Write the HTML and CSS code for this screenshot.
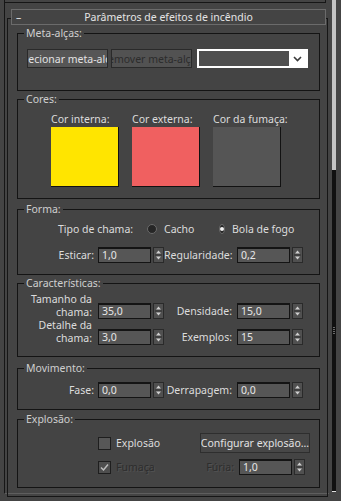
FILE: index.html
```html
<!DOCTYPE html>
<html lang="pt">
<head>
<meta charset="utf-8">
<title>Parâmetros de efeitos de incêndio</title>
<link rel="stylesheet" href="styles.css">
</head>
<body>
<div class="screen">
  <div class="main">
    <div class="outer">
      <div class="prev"></div>
      <div class="rollout">
        <div class="rollout-head">
          <span class="minus">–</span>
          <span class="title">Parâmetros de efeitos de incêndio</span>
          <span></span>
        </div>

        <fieldset class="grp grp-meta">
          <legend class="grp-label">Meta-alças:</legend>
          <div class="meta-body">
            <div class="btn"><span class="btn-text">Selecionar meta-alças</span></div>
            <div class="btn btn-off"><span class="btn-text">Remover meta-alças</span></div>
            <svg class="combo" width="111" height="19" viewBox="0 0 111 19">
              <rect x="0" y="0" width="111" height="19" fill="#ffffff"/>
              <rect x="2" y="2" width="90" height="15" fill="#4f4f4f"/>
              <path d="M97 8 L100.5 11.5 L104 8" fill="none" stroke="#3a3a3a" stroke-width="1.6"/>
            </svg>
          </div>
        </fieldset>

        <fieldset class="grp grp-cores">
          <legend class="grp-label">Cores:</legend>
          <div class="cores-body">
            <div class="swatch-col"><span class="sw-label">Cor interna:</span><span class="swatch sw-yellow"></span></div>
            <div class="swatch-col"><span class="sw-label">Cor externa:</span><span class="swatch sw-red"></span></div>
            <div class="swatch-col"><span class="sw-label">Cor da fumaça:</span><span class="swatch sw-gray"></span></div>
          </div>
        </fieldset>

        <fieldset class="grp grp-forma">
          <legend class="grp-label">Forma:</legend>
          <div class="forma-body">
            <div class="radio-row">
              <span class="radio-title">Tipo de chama:</span>
              <span class="radio-opt"><span class="radio"></span>Cacho</span>
              <span class="radio-opt"><span class="radio radio-on"></span>Bola de fogo</span>
            </div>
            <div class="num-row">
              <span class="lbl1">Esticar:</span>
              <span class="field">1,0</span>
              <span class="spin"><svg width="9" height="14" viewBox="0 0 9 14"><path d="M4.5 2.5 L7 5.5 L2 5.5 Z" fill="#cfcfcf"/><path d="M1 7 H8" stroke="#2e2e2e" stroke-width="1"/><path d="M4.5 11.5 L7 8.5 L2 8.5 Z" fill="#cfcfcf"/></svg></span>
              <span class="lbl2">Regularidade:</span>
              <span class="field">0,2</span>
              <span class="spin"><svg width="9" height="14" viewBox="0 0 9 14"><path d="M4.5 2.5 L7 5.5 L2 5.5 Z" fill="#cfcfcf"/><path d="M1 7 H8" stroke="#2e2e2e" stroke-width="1"/><path d="M4.5 11.5 L7 8.5 L2 8.5 Z" fill="#cfcfcf"/></svg></span>
            </div>
          </div>
        </fieldset>

        <fieldset class="grp grp-carac">
          <legend class="grp-label">Características:</legend>
          <div class="carac-body">
            <div class="num-row num-row-carac">
              <span class="lbl1 lbl-two">Tamanho da<br>chama:</span>
              <span class="field">35,0</span>
              <span class="spin"><svg width="9" height="14" viewBox="0 0 9 14"><path d="M4.5 2.5 L7 5.5 L2 5.5 Z" fill="#cfcfcf"/><path d="M1 7 H8" stroke="#2e2e2e" stroke-width="1"/><path d="M4.5 11.5 L7 8.5 L2 8.5 Z" fill="#cfcfcf"/></svg></span>
              <span class="lbl2">Densidade:</span>
              <span class="field">15,0</span>
              <span class="spin"><svg width="9" height="14" viewBox="0 0 9 14"><path d="M4.5 2.5 L7 5.5 L2 5.5 Z" fill="#cfcfcf"/><path d="M1 7 H8" stroke="#2e2e2e" stroke-width="1"/><path d="M4.5 11.5 L7 8.5 L2 8.5 Z" fill="#cfcfcf"/></svg></span>
            </div>
            <div class="num-row num-row-carac">
              <span class="lbl1 lbl-two">Detalhe da<br>chama:</span>
              <span class="field">3,0</span>
              <span class="spin"><svg width="9" height="14" viewBox="0 0 9 14"><path d="M4.5 2.5 L7 5.5 L2 5.5 Z" fill="#cfcfcf"/><path d="M1 7 H8" stroke="#2e2e2e" stroke-width="1"/><path d="M4.5 11.5 L7 8.5 L2 8.5 Z" fill="#cfcfcf"/></svg></span>
              <span class="lbl2">Exemplos:</span>
              <span class="field">15</span>
              <span class="spin"><svg width="9" height="14" viewBox="0 0 9 14"><path d="M4.5 2.5 L7 5.5 L2 5.5 Z" fill="#cfcfcf"/><path d="M1 7 H8" stroke="#2e2e2e" stroke-width="1"/><path d="M4.5 11.5 L7 8.5 L2 8.5 Z" fill="#cfcfcf"/></svg></span>
            </div>
          </div>
        </fieldset>

        <fieldset class="grp grp-mov">
          <legend class="grp-label">Movimento:</legend>
          <div class="mov-body">
            <div class="num-row">
              <span class="lbl1">Fase:</span>
              <span class="field">0,0</span>
              <span class="spin"><svg width="9" height="14" viewBox="0 0 9 14"><path d="M4.5 2.5 L7 5.5 L2 5.5 Z" fill="#cfcfcf"/><path d="M1 7 H8" stroke="#2e2e2e" stroke-width="1"/><path d="M4.5 11.5 L7 8.5 L2 8.5 Z" fill="#cfcfcf"/></svg></span>
              <span class="lbl2">Derrapagem:</span>
              <span class="field">0,0</span>
              <span class="spin"><svg width="9" height="14" viewBox="0 0 9 14"><path d="M4.5 2.5 L7 5.5 L2 5.5 Z" fill="#cfcfcf"/><path d="M1 7 H8" stroke="#2e2e2e" stroke-width="1"/><path d="M4.5 11.5 L7 8.5 L2 8.5 Z" fill="#cfcfcf"/></svg></span>
            </div>
          </div>
        </fieldset>

        <fieldset class="grp grp-expl">
          <legend class="grp-label">Explosão:</legend>
          <div class="expl-body">
            <div class="expl-row expl-row1">
              <span class="check-opt"><span class="check"></span>Explosão</span>
              <div class="btn btn-config"><span class="btn-text">Configurar explosão...</span></div>
            </div>
            <div class="expl-row expl-row2">
              <span class="check-opt check-opt-off"><span class="check check-on"><svg width="9" height="9" viewBox="0 0 9 9"><path d="M1 4.5 L3.5 7 L8 1.5" fill="none" stroke="#bdbdbd" stroke-width="1.5"/></svg></span>Fumaça</span>
              <span class="lbl-furia">Fúria:</span>
              <span class="field">1,0</span>
              <span class="spin"><svg width="9" height="14" viewBox="0 0 9 14"><path d="M4.5 2.5 L7 5.5 L2 5.5 Z" fill="#cfcfcf"/><path d="M1 7 H8" stroke="#2e2e2e" stroke-width="1"/><path d="M4.5 11.5 L7 8.5 L2 8.5 Z" fill="#cfcfcf"/></svg></span>
            </div>
          </div>
        </fieldset>
      </div>
    </div>
  </div>
  <div class="scrollbar">
    <div class="sb-track"></div>
    <div class="sb-thumb"><span class="grip"></span></div>
    <div class="sb-end"></div>
  </div>
</div>
</body>
</html>
```

FILE: styles.css
```css
* { box-sizing: border-box; }
html, body { margin: 0; padding: 0; }
body {
  width: 341px;
  height: 501px;
  overflow: hidden;
  background: #444444;
  font-family: "Noto Sans", "Liberation Sans", sans-serif;
  font-size: 10.5px;
  color: #dcdcdc;
}
.screen { display: flex; height: 501px; }
.main { width: 332px; }

.outer {
  margin-left: 4px;
  width: 325px;
  height: 494px;
  border-left: 1px solid #161616;
  border-bottom: 1px solid #5e5e5e;
}
.prev {
  width: 321px;
  height: 3px;
  border-right: 1px solid #161616;
  border-bottom: 1px solid #161616;
}
.rollout {
  margin: 15px 0 0 2px;
  width: 321px;
  border: 1px solid #161616;
  padding-bottom: 8px;
}
.rollout-head {
  margin: -10px 0 0 3px;
  width: 315px;
  height: 16px;
  border: 1px solid #6b6b6b;
  background: #444444;
  display: grid;
  grid-template-columns: 12px 1fr 12px;
  align-items: center;
  line-height: 14px;
  color: #e4e4e4;
}
.minus { padding-left: 4px; }
.title { text-align: center; }

.grp {
  margin: 0 0 0 9px;
  width: 303px;
  border: 1px solid #141414;
  padding: 0;
  min-width: 0;
}
.grp-label {
  margin-left: 6px;
  padding: 0 2px;
  line-height: 14px;
  color: #cfcfcf;
}
.grp-meta { margin-top: 1px; }
.grp-cores { margin-top: 1px; }
.grp-forma { margin-top: 3px; }
.grp-carac { margin-top: 1px; }
.grp-mov { margin-top: 4px; }
.grp-expl { margin-top: 2px; }

/* Meta */
.meta-body {
  display: flex;
  align-items: flex-start;
  padding: 9px 0 11px 9px;
  height: 50px;
}
.btn {
  width: 81px;
  height: 19px;
  margin: 0 3px 0 0;
  border: 1px solid #2a2a2a;
  background: #565656;
  color: #e2e2e2;
  display: flex;
  justify-content: center;
  align-items: center;
  overflow: hidden;
  white-space: nowrap;
  line-height: 14px;
  flex: none;
}
.btn-text { flex: none; }
.btn-off { color: #2c2c2c; background: #525252; margin-right: 5px; }
.combo { flex: none; display: block; }

/* Cores */
.cores-body {
  display: flex;
  gap: 13px;
  padding: 6px 0 11px 33px;
}
.swatch-col { display: flex; flex-direction: column; width: 68px; }
.sw-label { line-height: 14px; white-space: nowrap; margin-bottom: 1px; }
.swatch {
  width: 68px;
  height: 60px;
  border-right: 1px solid #121212;
  border-bottom: 1px solid #121212;
}
.sw-yellow { background: #ffe500; }
.sw-red { background: #f06060; }
.sw-gray { background: #555555; }

/* Forma */
.forma-body { padding: 5px 0 11px 0; }
.radio-row {
  display: flex;
  align-items: center;
  height: 16px;
  padding-left: 40px;
  margin-bottom: 10px;
}
.radio-title { width: 89px; }
.radio-opt { display: flex; align-items: center; gap: 7px; width: 72px; white-space: nowrap; }
.radio {
  width: 10px;
  height: 10px;
  border-radius: 50%;
  background: #262626;
  border: 1px solid #6a6a6a;
  display: flex;
  align-items: center;
  justify-content: center;
}
.radio-on::after {
  content: "";
  width: 4px;
  height: 4px;
  border-radius: 50%;
  background: #f0f0f0;
}

/* Numeric rows */
.num-row {
  display: grid;
  grid-template-columns: 80px 53px 13px 73px 53px 13px;
  align-items: end;
  height: 16px;
}
.lbl1 { text-align: right; padding-right: 4px; line-height: 16px; white-space: nowrap; }
.lbl2 { text-align: right; padding-right: 5px; line-height: 16px; white-space: nowrap; }
.field {
  height: 16px;
  border: 1px solid #141414;
  border-top-width: 2px;
  background: #565656;
  color: #e6e6e6;
  padding-left: 3px;
  line-height: 13px;
}
.spin {
  margin-left: 2px;
  width: 11px;
  height: 16px;
  border: 1px solid #2a2a2a;
  background: #505050;
  display: flex;
  align-items: center;
  justify-content: center;
}

.carac-body { padding: 3px 0 11px 0; }
.num-row-carac { height: 26px; }
.num-row-carac .lbl1 { padding-right: 6px; }
.lbl-two { line-height: 13px; }

.mov-body { padding: 7px 0 11px 0; }

/* Explosão */
.expl-body { padding: 7px 0 12px 80px; }
.expl-row { display: flex; align-items: center; }
.expl-row1 { height: 20px; margin-bottom: 6px; }
.expl-row2 { height: 16px; }
.check-opt { display: flex; align-items: center; gap: 5px; width: 102px; flex: none; }
.check-opt-off { color: #2d2d2d; text-shadow: 1px 1px 0 #525252; }
.check {
  width: 13px;
  height: 13px;
  border: 1px solid #1e1e1e;
  background: #575757;
  display: flex;
  align-items: center;
  justify-content: center;
}
.check-on { background: #4e4e4e; }
.btn-config {
  width: 110px;
  height: 20px;
  margin: 0;
  background: #474747;
  border: 1px solid #2e2e2e;
}
.lbl-furia {
  width: 39px;
  text-align: right;
  padding-right: 5px;
  color: #2d2d2d;
  text-shadow: 1px 1px 0 #525252;
  line-height: 16px;
  flex: none;
}
.expl-row2 .field { width: 53px; flex: none; }

/* Scrollbar */
.scrollbar {
  width: 4px;
  display: flex;
  flex-direction: column;
}
.sb-track { height: 170px; background: #c3c3c3; }
.sb-thumb {
  height: 321px;
  background: #101010;
  display: flex;
  align-items: center;
  justify-content: center;
}
.grip {
  width: 2px;
  height: 7px;
  background: repeating-linear-gradient(#6a6a6a 0 1px, transparent 1px 2px);
}
.sb-end { height: 1px; background: #e0e0e0; }
```
